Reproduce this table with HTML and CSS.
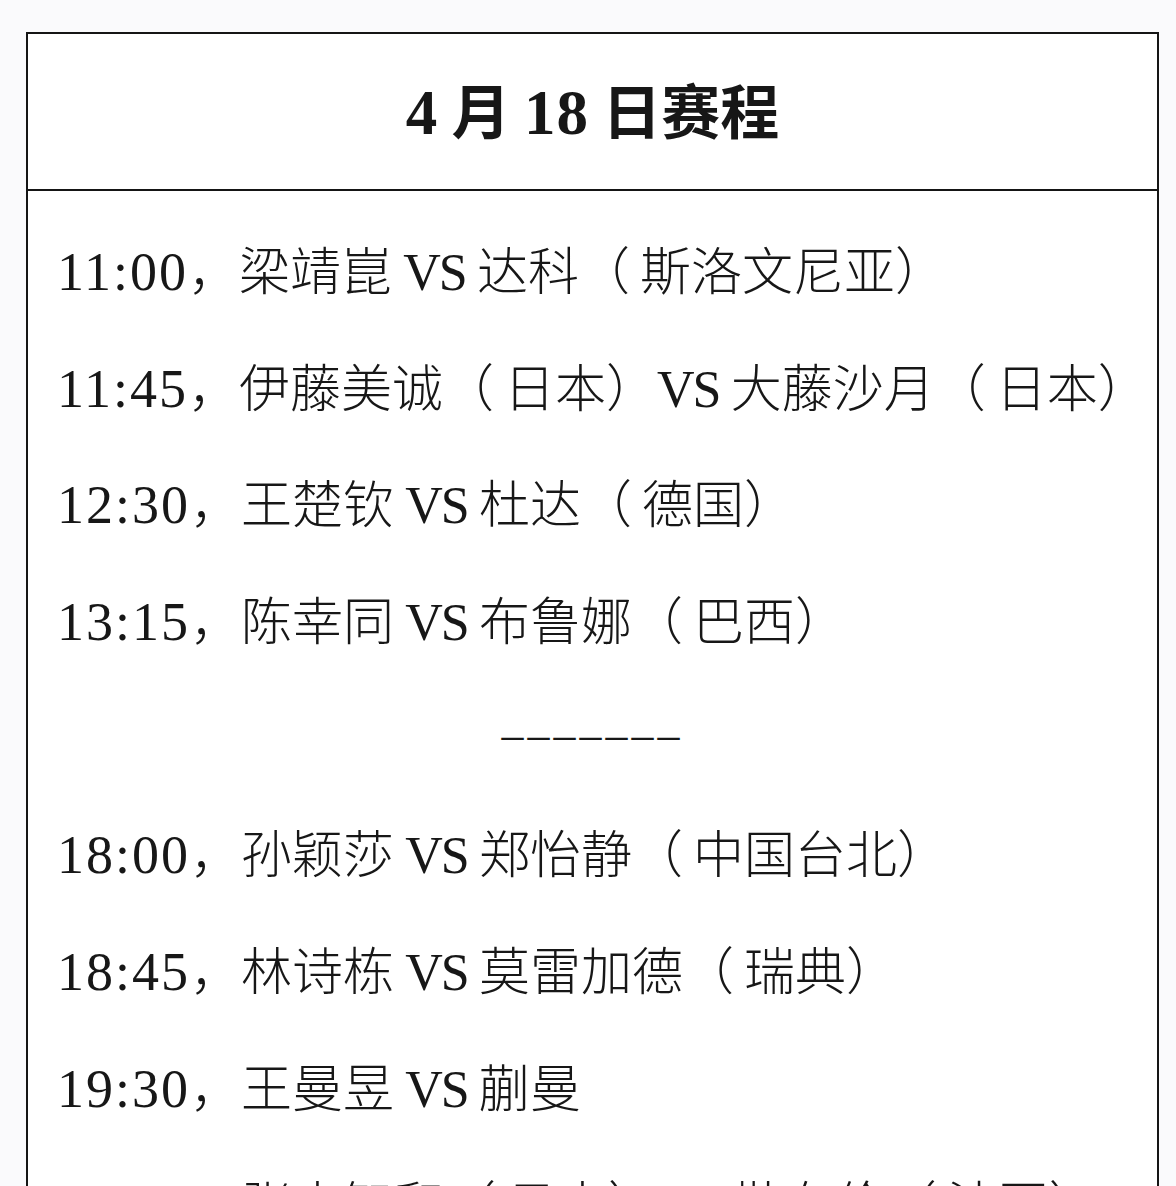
FILE: index.html
```html
<!DOCTYPE html>
<html lang="zh-CN">
<head>
<meta charset="utf-8">
<title>4月18日赛程</title>
<link rel="stylesheet" href="styles.css">
</head>
<body>
<div class="sheet">
  <div class="title-cell">
    <h1 class="title"><span class="lat">4</span> 月 <span class="lat">18</span> 日赛程</h1>
  </div>
  <div class="rows">
    <p class="row"><span class="lat">11:00</span>，梁靖崑 <span class="vs">VS</span> 达科<span class="op">（</span>斯洛文尼亚）</p>
    <p class="row"><span class="lat">11:45</span>，伊藤美诚<span class="op">（</span>日本）<span class="vs">VS</span> 大藤沙月<span class="op">（</span>日本）</p>
    <p class="row"><span class="lat">12:30</span>，王楚钦 <span class="vs">VS</span> 杜达<span class="op">（</span>德国）</p>
    <p class="row"><span class="lat">13:15</span>，陈幸同 <span class="vs">VS</span> 布鲁娜<span class="op">（</span>巴西）</p>
    <p class="row sep"><span class="dashes">–––––––</span></p>
    <p class="row"><span class="lat">18:00</span>，孙颖莎 <span class="vs">VS</span> 郑怡静<span class="op">（</span>中国台北）</p>
    <p class="row"><span class="lat">18:45</span>，林诗栋 <span class="vs">VS</span> 莫雷加德<span class="op">（</span>瑞典）</p>
    <p class="row"><span class="lat">19:30</span>，王曼昱 <span class="vs">VS</span> 蒯曼</p>
    <p class="row"><span class="lat">20:15</span>，张本智和<span class="op">（</span>日本）<span class="vs">VS</span> 勒布伦<span class="op">（</span>法国）</p>
  </div>
</div>
</body>
</html>
```

FILE: styles.css
```css
html, body {
  margin: 0;
  padding: 0;
}

body {
  background: #fafafc;
  color: #171717;
  font-family: "Noto Sans CJK SC", "Liberation Serif", serif;
}

.sheet {
  margin: 32px 0 0 26px;
  width: 1133px;
  box-sizing: border-box;
  border: 2px solid #151515;
  border-bottom: none;
  background: #ffffff;
}

.title-cell {
  height: 155px;
  display: flex;
  align-items: center;
  justify-content: center;
  border-bottom: 2px solid #151515;
}

.title {
  margin: 0;
  font-family: "Noto Sans CJK SC", sans-serif;
  font-weight: 700;
  font-size: 59px;
  line-height: 1;
  white-space: pre;
}

.title .lat {
  font-family: "Liberation Serif", serif;
  font-weight: 700;
  font-size: 63px;
  letter-spacing: 1px;
}

.rows {
  padding: 19px 0 0 29px;
}

.row {
  margin: 0;
  height: 116.7px;
  line-height: 116.7px;
  font-size: 51px;
  font-weight: 300;
  white-space: nowrap;
}

.lat {
  font-family: "Liberation Serif", serif;
  font-size: 54px;
  font-weight: 400;
  letter-spacing: 2px;
}

.vs {
  font-family: "Liberation Serif", serif;
  font-size: 52px;
  font-weight: 400;
  letter-spacing: -2px;
}

.op {
  margin-right: 10px;
}

.sep {
  text-align: center;
  padding-right: 29px;
}

.dashes {
  font-family: "Liberation Serif", serif;
  font-size: 44px;
  letter-spacing: 4px;
  font-weight: 400;
  vertical-align: 8px;
}
```
